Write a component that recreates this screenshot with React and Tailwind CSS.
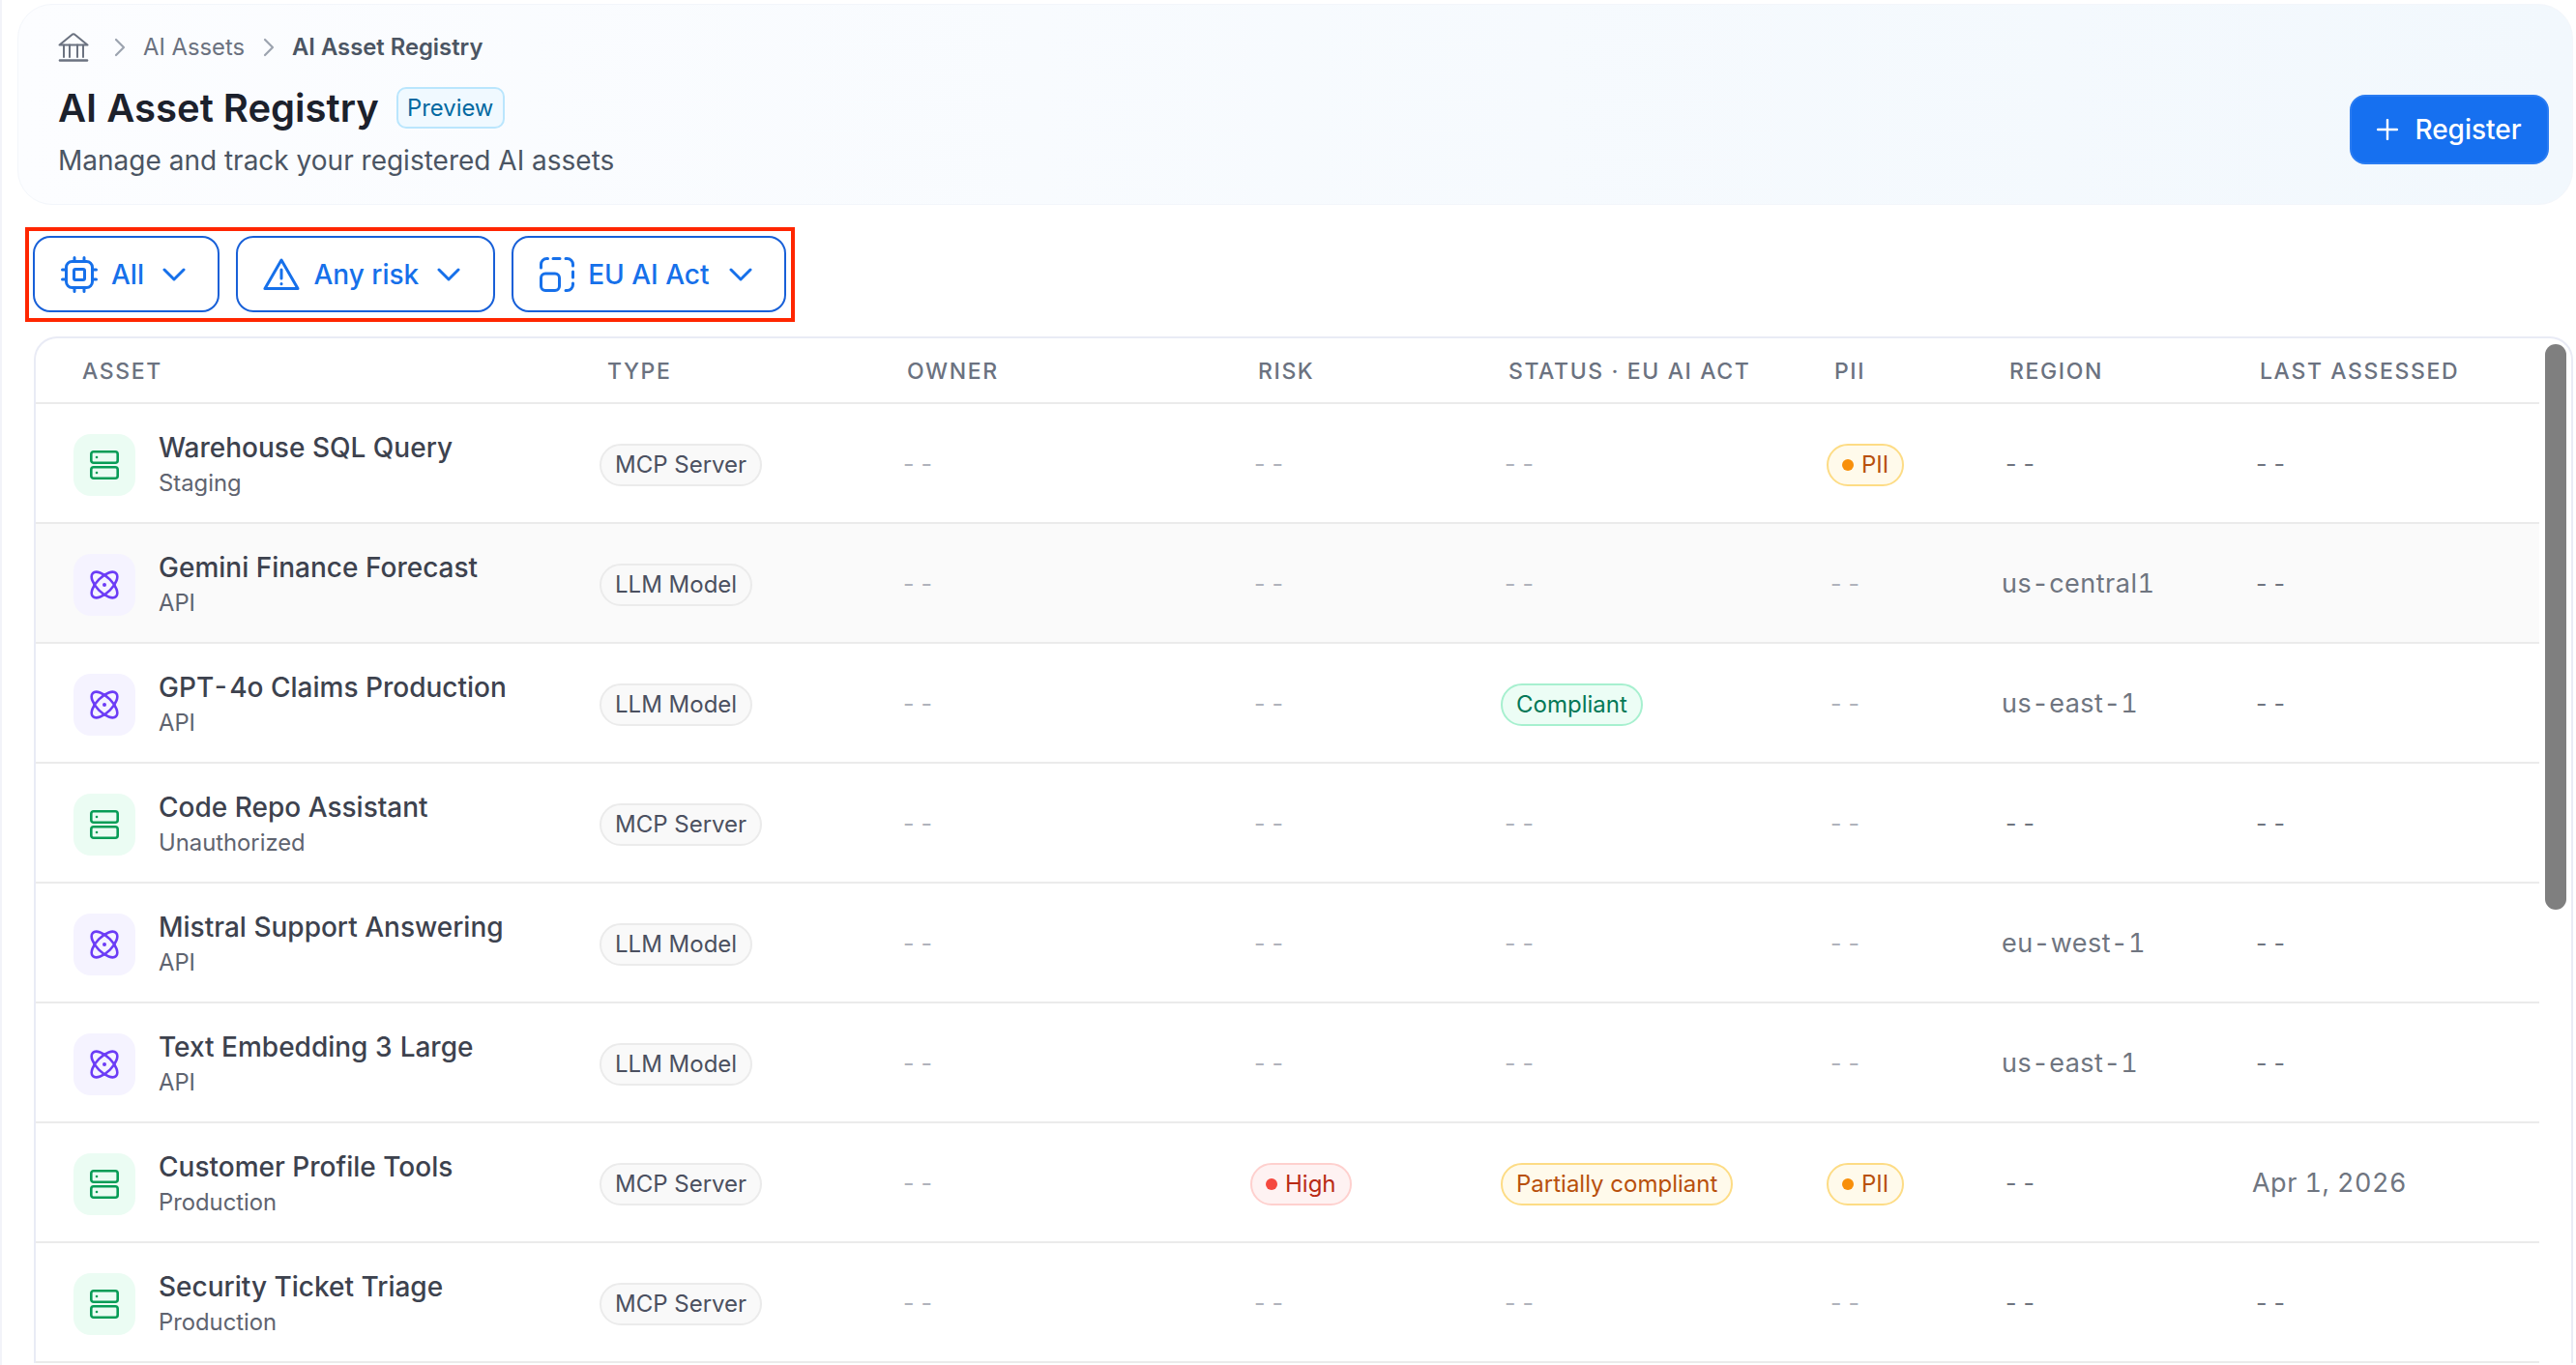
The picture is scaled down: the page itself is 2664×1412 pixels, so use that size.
import React from 'react';

const ROWS = [
  { name: 'Warehouse SQL Query', sub: 'Staging', kind: 'mcp', pii: true },
  { name: 'Gemini Finance Forecast', sub: 'API', kind: 'llm', region: 'us-central1', hover: true },
  { name: 'GPT-4o Claims Production', sub: 'API', kind: 'llm', region: 'us-east-1', status: 'ok' },
  { name: 'Code Repo Assistant', sub: 'Unauthorized', kind: 'mcp' },
  { name: 'Mistral Support Answering', sub: 'API', kind: 'llm', region: 'eu-west-1' },
  { name: 'Text Embedding 3 Large', sub: 'API', kind: 'llm', region: 'us-east-1' },
  { name: 'Customer Profile Tools', sub: 'Production', kind: 'mcp', risk: 'High', status: 'partial', pii: true, date: 'Apr 1, 2026' },
  { name: 'Security Ticket Triage', sub: 'Production', kind: 'mcp' },
];

const COLS = 'grid grid-cols-[583px_310px_363px_259px_337px_181px_259px_297px]';

function Chevron() {
  return (
    <svg width="24" height="14" viewBox="0 0 24 14" fill="none" stroke="currentColor" strokeWidth="3" strokeLinecap="round" strokeLinejoin="round">
      <path d="M2 2l10 10L22 2" />
    </svg>
  );
}

function ChipIcon() {
  return (
    <svg width="38" height="38" viewBox="0 0 38 38" fill="none" stroke="currentColor" strokeWidth="3" strokeLinecap="round" strokeLinejoin="round">
      <rect x="5.5" y="5.5" width="27" height="27" rx="6" />
      <rect x="13.5" y="13.5" width="11" height="11" rx="1.5" />
      <path d="M14 1.5v4M24 1.5v4M14 32.5v4M24 32.5v4M1.5 14h4M1.5 24h4M32.5 14h4M32.5 24h4" />
    </svg>
  );
}

function WarnIcon() {
  return (
    <svg width="38" height="34" viewBox="0 0 38 34" fill="none" stroke="currentColor" strokeWidth="3" strokeLinecap="round" strokeLinejoin="round">
      <path d="M19 2L2 31.5h34L19 2z" />
      <path d="M19 12v9M19 26.5v.2" />
    </svg>
  );
}

function DashedIcon() {
  return (
    <svg width="36" height="36" viewBox="0 0 36 36" fill="none" stroke="currentColor" strokeWidth="3" strokeLinecap="round" strokeLinejoin="round">
      <path d="M1.5 11V7.5a6 6 0 0 1 6-6h1M14 1.5h7M27 1.5h1.5a6 6 0 0 1 6 6V9M34.5 15v6M34.5 27v1.5a6 6 0 0 1-6 6H27" />
      <rect x="1.5" y="17" width="19" height="17.5" rx="4.5" />
    </svg>
  );
}

function ServerIcon() {
  return (
    <svg width="30" height="30" viewBox="0 0 30 30" fill="none" stroke="currentColor" strokeWidth="2.6" strokeLinejoin="round">
      <rect x="1.3" y="1.3" width="27.4" height="11.4" rx="2.5" />
      <rect x="1.3" y="17.3" width="27.4" height="11.4" rx="2.5" />
      <circle cx="7" cy="7" r="1.3" fill="currentColor" stroke="none" />
      <circle cx="7" cy="23" r="1.3" fill="currentColor" stroke="none" />
    </svg>
  );
}

function AtomIcon() {
  return (
    <svg width="30" height="30" viewBox="0 0 30 30" fill="none" stroke="currentColor" strokeWidth="2.6">
      <ellipse cx="15" cy="15" rx="17" ry="8" transform="rotate(45 15 15)" />
      <ellipse cx="15" cy="15" rx="17" ry="8" transform="rotate(-45 15 15)" />
      <circle cx="15" cy="15" r="2" fill="currentColor" stroke="none" />
    </svg>
  );
}

function LandmarkIcon() {
  return (
    <svg width="32" height="30" viewBox="0 0 32 30" fill="none" stroke="currentColor" strokeWidth="2" strokeLinecap="round" strokeLinejoin="round">
      <path d="M1.5 12.5L14 2.2a3 3 0 0 1 4 0L30.5 12.5z" />
      <path d="M6 12.5V25M12 12.5V25M20 12.5V25M26 12.5V25" />
      <path d="M2 28.5h28" strokeWidth="2.6" />
    </svg>
  );
}

function Dash({ dark }) {
  return <span className={`text-[25px] tracking-[0.28em] normal-nums ${dark ? 'text-[#6f7580]' : 'text-[#b0b3bc]'}`}>--</span>;
}

function Pill({ className, dot, children }) {
  return (
    <span className={`inline-flex h-[44px] items-center gap-[8px] rounded-full border-2 px-[14px] text-[24px] ${className}`}>
      {dot && <span className={`h-[12px] w-[12px] rounded-full ${dot}`} />}
      {children}
    </span>
  );
}

function Row({ row }) {
  return (
    <div className={`${COLS} h-[124px] items-center border-b-2 border-[#ebebeb] pt-[3px] ${row.hover ? 'bg-[#fafafa]' : ''}`}>
      <div className="flex items-center gap-[24px] pl-[39px]">
        <div className={`flex h-[64px] w-[64px] items-center justify-center rounded-[18px] ${row.kind === 'mcp' ? 'bg-[#ebfcf3] text-[#079c56]' : 'bg-[#f5f3ff] text-[#6b3cf6]'}`}>
          {row.kind === 'mcp' ? <ServerIcon /> : <AtomIcon />}
        </div>
        <div className="flex flex-col">
          <span className="text-[28px] leading-[38px] font-medium text-[#3d424e] tabular-nums">{row.name}</span>
          <span className="text-[23.8px] leading-[36px] text-[#5f6470]">{row.sub}</span>
        </div>
      </div>
      <div>
        <Pill className="border-[#ebebeb] bg-[#f9f9f9] text-[#4b5060]">{row.kind === 'mcp' ? 'MCP Server' : 'LLM Model'}</Pill>
      </div>
      <div className="pl-[4px]"><Dash /></div>
      <div>
        {row.risk ? (
          <Pill className="border-[#fed0ce] bg-[#fef2f2] text-[#b92a15]" dot="bg-[#f5483e]">{row.risk}</Pill>
        ) : (
          <span className="pl-[4px]"><Dash /></span>
        )}
      </div>
      <div>
        {row.status === 'ok' && <Pill className="border-[#a7f0cf] bg-[#ecfdf5] text-[#047857]">Compliant</Pill>}
        {row.status === 'partial' && <Pill className="border-[#fddc85] bg-[#fffaeb] text-[#b8500c]">Partially compliant</Pill>}
        {!row.status && <span className="pl-[4px]"><Dash /></span>}
      </div>
      <div>
        {row.pii ? (
          <Pill className="border-[#fddc85] bg-[#fffaeb] text-[#b8500c]" dot="bg-[#f88f0a]">PII</Pill>
        ) : (
          <span className="pl-[4px]"><Dash /></span>
        )}
      </div>
      <div className={`text-[27px] tracking-[0.018em] text-[#6f7580] tabular-nums ${row.region ? '' : 'pl-[4px]'}`}>{row.region || <Dash dark />}</div>
      <div className={`text-[27px] tracking-[0.018em] text-[#6f7580] tabular-nums ${row.date ? '' : 'pl-[4px]'}`}>{row.date || <Dash dark />}</div>
    </div>
  );
}

export default function App() {
  const heads = ['TYPE', 'OWNER', 'RISK', 'STATUS · EU AI ACT', 'PII', 'REGION', 'LAST ASSESSED'];
  return (
    <div className="h-[1412px] w-full overflow-hidden border-l-2 border-[#f2f3f9] bg-white pt-[4px] font-['Inter',sans-serif]">
      {/* Header */}
      <div className="ml-[16px] mr-[3px] flex h-[208px] items-end justify-between rounded-[36px] border border-[#f3f6fb] bg-linear-to-r from-[#fcfdff] to-[#f2f8fd] pl-[41px] pr-[24px]">
        <div className="flex flex-col pb-[26px]">
          <div className="flex items-center text-[23.8px] text-[#6b7280]">
            <span className="text-[#6b7280]"><LandmarkIcon /></span>
            <svg className="ml-[26px] mr-[18px]" width="12" height="20" viewBox="0 0 12 20" fill="none" stroke="#9ca3af" strokeWidth="2.2" strokeLinecap="round" strokeLinejoin="round"><path d="M2 2l8 8-8 8" /></svg>
            <span>AI Assets</span>
            <svg className="ml-[19px] mr-[18px]" width="12" height="20" viewBox="0 0 12 20" fill="none" stroke="#9ca3af" strokeWidth="2.2" strokeLinecap="round" strokeLinejoin="round"><path d="M2 2l8 8-8 8" /></svg>
            <span className="font-semibold text-[#4b5563]">AI Asset Registry</span>
          </div>
          <div className="mt-[19.5px] flex items-center gap-[18px]">
            <h1 className="text-[40px] leading-[50px] font-semibold text-[#1c212c]">AI Asset Registry</h1>
            <span className="flex h-[43px] w-[112px] items-center justify-center rounded-[10px] border-2 border-[#bae6fd] bg-[#f0f9ff] text-[23.8px] text-[#0369a1]">Preview</span>
          </div>
          <p className="mt-[10.5px] text-[28px] leading-[38px] text-[#4b5563]">Manage and track your registered AI assets</p>
        </div>
        <button className="mb-[41px] flex h-[72px] w-[206px] items-center justify-center gap-[17px] rounded-[16px] border-2 border-[#2a7cf2] bg-[#1670f0] text-[28px] font-medium text-white">
          <svg width="22" height="22" viewBox="0 0 22 22" fill="none" stroke="currentColor" strokeWidth="2.4" strokeLinecap="round"><path d="M11 1v20M1 11h20" /></svg>
          Register
        </button>
      </div>

      {/* Filters, with the reference's red annotation box round them */}
      <div className="ml-[24px] mt-[23px] flex w-[796px] gap-[17.5px] border-4 border-[#ff2600] pb-[6px] pl-[4px] pr-[5px] pt-[5px] text-[28px] text-[#1670ea]">
        <button className="flex h-[79px] w-[193px] items-center rounded-[18px] border-2 border-[#1860d8] pl-[27px]">
          <ChipIcon />
          <span className="ml-[14px] font-medium">All</span>
          <span className="ml-[19px]"><Chevron /></span>
        </button>
        <button className="flex h-[79px] w-[267.5px] items-center rounded-[18px] border-2 border-[#1860d8] pl-[26px]">
          <WarnIcon />
          <span className="ml-[14px] font-medium">Any risk</span>
          <span className="ml-[19px]"><Chevron /></span>
        </button>
        <button className="flex h-[79px] w-[284px] items-center rounded-[18px] border-2 border-[#1860d8] pl-[27px]">
          <DashedIcon />
          <span className="ml-[14px] font-medium">EU AI Act</span>
          <span className="ml-[20px]"><Chevron /></span>
        </button>
      </div>

      {/* Table */}
      <div className="relative ml-[33px] mr-[3px] mt-[15px] rounded-t-[24px] border-2 border-b-0 border-[#e9ebf5] pr-[33px]">
        <div className={`${COLS} h-[68px] items-center border-b-2 border-[#ebebeb] pt-[2px] text-[23px] font-medium tracking-[0.07em] text-[#6b7280]`}>
          <div className="pl-[48px]">ASSET</div>
          {heads.map((h) => (
            <div key={h} className="pl-[8px]">{h}</div>
          ))}
        </div>
        {ROWS.map((row) => (
          <Row key={row.name} row={row} />
        ))}
        <div className="absolute right-[5px] top-[6px] h-[585px] w-[22px] rounded-full bg-[#7f7f7f]" />
      </div>
    </div>
  );
}
